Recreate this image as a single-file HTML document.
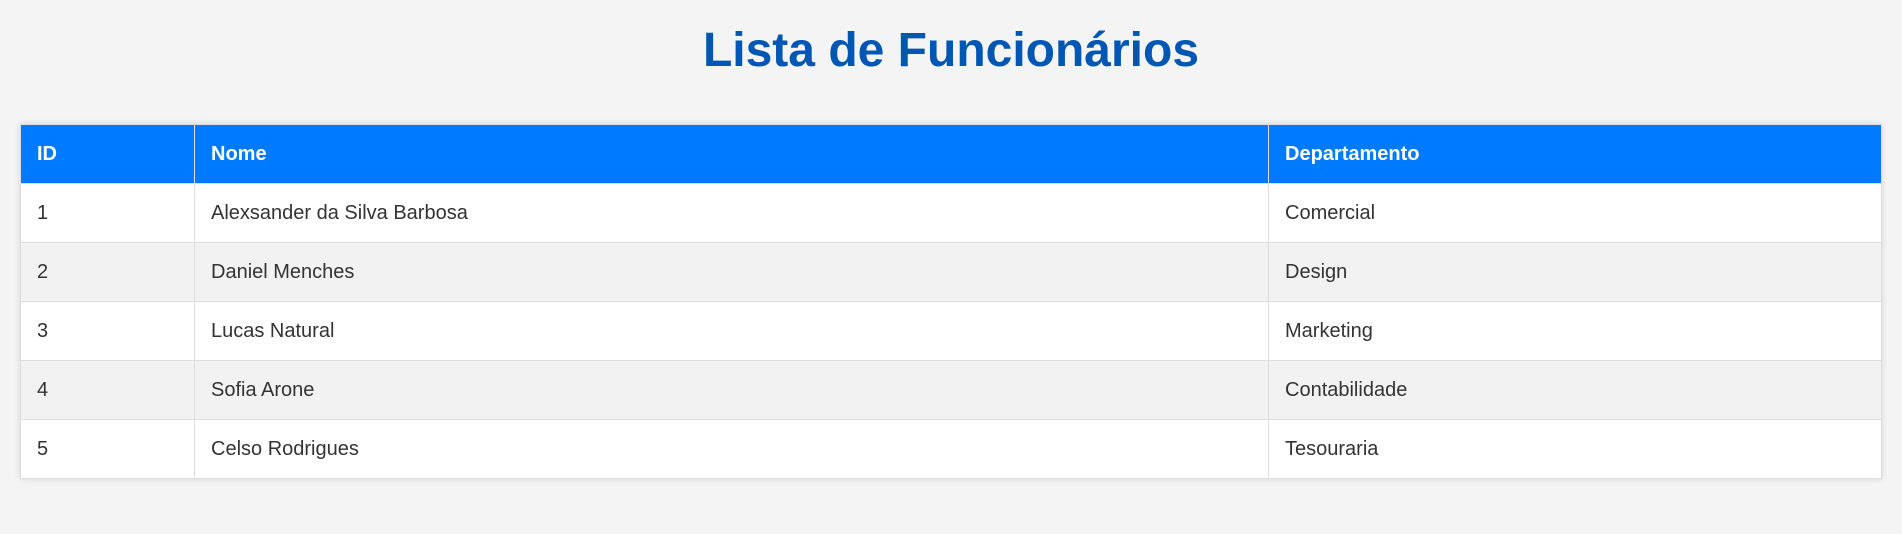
<!DOCTYPE html>
<html><head><meta charset="utf-8"><style>
html,body{margin:0;padding:0;background:#f4f4f4;width:1902px;height:534px;overflow:hidden;font-family:"Liberation Sans",Arial,sans-serif;}
h1{margin:0;position:absolute;top:16px;left:0;width:1902px;text-align:center;font-size:48px;line-height:70px;color:#0056b3;font-weight:bold;}
table{position:absolute;left:20px;top:124px;width:1862px;border-collapse:collapse;background:#fff;box-shadow:0 0 6px rgba(0,0,0,0.12);font-size:20px;}
th,td{border:1px solid #ddd;padding:0 16px;text-align:left;color:#333;}
th{background:#007bff;color:#fff;height:58px;font-weight:bold;}
td{height:58px;background:#fff;}
tr:nth-child(odd) td{background:#f2f2f2;}
</style></head><body>
<h1>Lista de Funcionários</h1>
<table>
<tr><th style="width:141px">ID</th><th style="width:1041px">Nome</th><th>Departamento</th></tr>
<tr><td>1</td><td>Alexsander da Silva Barbosa</td><td>Comercial</td></tr>
<tr><td>2</td><td>Daniel Menches</td><td>Design</td></tr>
<tr><td>3</td><td>Lucas Natural</td><td>Marketing</td></tr>
<tr><td>4</td><td>Sofia Arone</td><td>Contabilidade</td></tr>
<tr><td>5</td><td>Celso Rodrigues</td><td>Tesouraria</td></tr>
</table>
</body></html>
